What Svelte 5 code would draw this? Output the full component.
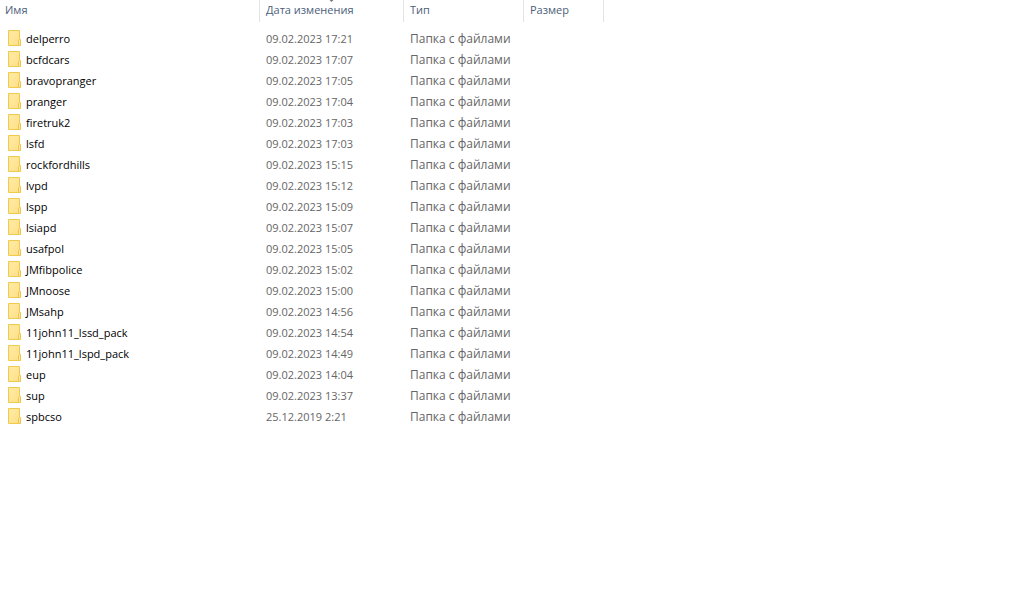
<script>
  const columns = [
    { key: 'name', label: 'Имя' },
    { key: 'date', label: 'Дата изменения', sorted: true },
    { key: 'type', label: 'Тип' },
    { key: 'size', label: 'Размер' }
  ];

  const folders = [
    ['delperro', '09.02.2023 17:21'],
    ['bcfdcars', '09.02.2023 17:07'],
    ['bravopranger', '09.02.2023 17:05'],
    ['pranger', '09.02.2023 17:04'],
    ['firetruk2', '09.02.2023 17:03'],
    ['lsfd', '09.02.2023 17:03'],
    ['rockfordhills', '09.02.2023 15:15'],
    ['lvpd', '09.02.2023 15:12'],
    ['lspp', '09.02.2023 15:09'],
    ['lsiapd', '09.02.2023 15:07'],
    ['usafpol', '09.02.2023 15:05'],
    ['JMfibpolice', '09.02.2023 15:02'],
    ['JMnoose', '09.02.2023 15:00'],
    ['JMsahp', '09.02.2023 14:56'],
    ['11john11_lssd_pack', '09.02.2023 14:54'],
    ['11john11_lspd_pack', '09.02.2023 14:49'],
    ['eup', '09.02.2023 14:04'],
    ['sup', '09.02.2023 13:37'],
    ['spbcso', '25.12.2019 2:21']
  ];
</script>

<svg class="defs" width="0" height="0" aria-hidden="true">
  <linearGradient id="folder-fill" x1="0" y1="0" x2="1" y2="1">
    <stop offset="0" stop-color="#ffeba6" />
    <stop offset="1" stop-color="#ffdf87" />
  </linearGradient>
</svg>

<main>
  <table>
    <colgroup>
      {#each columns as column}
        <col class={column.key} />
      {/each}
      <col />
    </colgroup>
    <thead>
      <tr>
        {#each columns as column}
          <th scope="col" aria-sort={column.sorted ? 'descending' : undefined}>
            <button type="button">
              {column.label}
              {#if column.sorted}
                <svg class="arrow" width="5" height="2" viewBox="0 0 5 2" aria-hidden="true">
                  <path d="M0.5 0H4.5L2.5 2Z" fill="#7a7a7a" />
                </svg>
              {/if}
            </button>
          </th>
        {/each}
        <td></td>
      </tr>
    </thead>
    <tbody>
      {#each folders as [name, date]}
        <tr>
          <td>
            <div class="entry">
              <svg width="14" height="17" viewBox="0 0 14 17" aria-hidden="true">
                <path d="M0.5 0.5H11.5V15.5H0.5Z" fill="url(#folder-fill)" stroke="#f0ca4d" />
                <path d="M10.5 15.5V10.5L11.5 9.5H12.5V15.5Z" fill="#ffe699" stroke="#ecc54a" />
              </svg>
              <span>{name}</span>
            </div>
          </td>
          <td class="detail">{date}</td>
          <td class="detail kind">Папка с файлами</td>
          <td></td>
          <td></td>
        </tr>
      {/each}
    </tbody>
  </table>
</main>

<style>
  :global(body) {
    margin: 0;
    background: #fff;
  }

  .defs {
    position: absolute;
  }

  main {
    font-family: 'Segoe UI', 'Open Sans', 'Noto Sans', sans-serif;
    font-size: 11px;
    line-height: 16px;
    color: #000;
  }

  table {
    width: 100%;
    table-layout: fixed;
    border-collapse: separate;
    border-spacing: 0;
  }

  .name {
    width: 260px;
  }

  .date {
    width: 144px;
  }

  .type {
    width: 120px;
  }

  .size {
    width: 80px;
  }

  th,
  td {
    padding: 0;
    text-align: left;
    font-weight: 400;
    white-space: nowrap;
  }

  th {
    box-sizing: border-box;
    height: 22px;
    border-right: 1px solid #e5e5e5;
  }

  th button {
    position: relative;
    display: block;
    width: 100%;
    height: 22px;
    padding: 0 6px 2px;
    border: 0;
    background: none;
    color: #4c607a;
    font: inherit;
    line-height: 20px;
    text-align: left;
  }

  th:first-child button {
    padding-left: 5px;
  }

  .arrow {
    position: absolute;
    top: 0;
    left: 50%;
    margin-left: -3px;
  }

  tbody::before {
    content: '';
    display: block;
    height: 6px;
  }

  tbody td {
    height: 21px;
  }

  .entry {
    display: flex;
    align-items: center;
    gap: 4px;
    padding-left: 8px;
  }

  .detail {
    padding-left: 6px;
    color: #666;
  }

  .kind {
    font-size: 12px;
  }
</style>
